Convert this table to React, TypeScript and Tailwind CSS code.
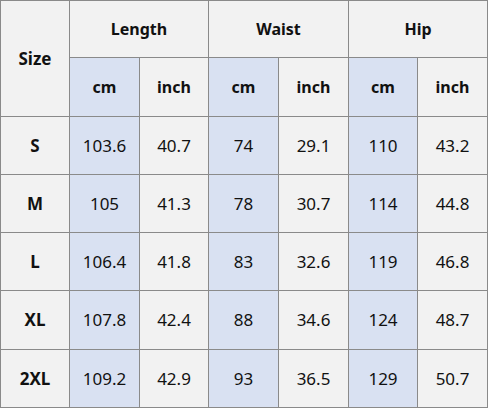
import React from "react";

const rows = [
  ["S", "103.6", "40.7", "74", "29.1", "110", "43.2"],
  ["M", "105", "41.3", "78", "30.7", "114", "44.8"],
  ["L", "106.4", "41.8", "83", "32.6", "119", "46.8"],
  ["XL", "107.8", "42.4", "88", "34.6", "124", "48.7"],
  ["2XL", "109.2", "42.9", "93", "36.5", "129", "50.7"],
];

export default function App() {
  const cell = "flex items-center justify-center text-[#111]";
  return (
    <div
      className="w-[488px] h-[408px] grid grid-cols-[68px_69px_68px_69px_69px_68px_69px] grid-rows-[56px_58px_57px_57px_57px_58px_57px] gap-px p-px bg-[#8a8a8a]"
      style={{ fontFamily: '"Noto Sans", "Open Sans", sans-serif' }}
    >
      <div className={`${cell} text-[17px] row-span-2 bg-[#f2f2f2] font-bold`}>Size</div>
      <div className={`${cell} text-[16px] col-span-2 bg-[#f2f2f2] font-bold`}>Length</div>
      <div className={`${cell} text-[16px] col-span-2 bg-[#f2f2f2] font-bold`}>Waist</div>
      <div className={`${cell} text-[16px] col-span-2 bg-[#f2f2f2] font-bold`}>Hip</div>
      {["cm", "inch", "cm", "inch", "cm", "inch"].map((u, i) => (
        <div
          key={i}
          className={`${cell} text-[16px] font-bold ${i % 2 === 0 ? "bg-[#d9e1f2]" : "bg-[#f2f2f2]"}`}
        >
          {u}
        </div>
      ))}
      {rows.map((r, ri) =>
        r.map((v, ci) => (
          <div
            key={`${ri}-${ci}`}
            className={`${cell} text-[17px] ${ci === 0 ? "font-bold" : ""} ${
              ci > 0 && ci % 2 === 1 ? "bg-[#d9e1f2]" : "bg-[#f2f2f2]"
            }`}
          >
            {v}
          </div>
        ))
      )}
    </div>
  );
}
